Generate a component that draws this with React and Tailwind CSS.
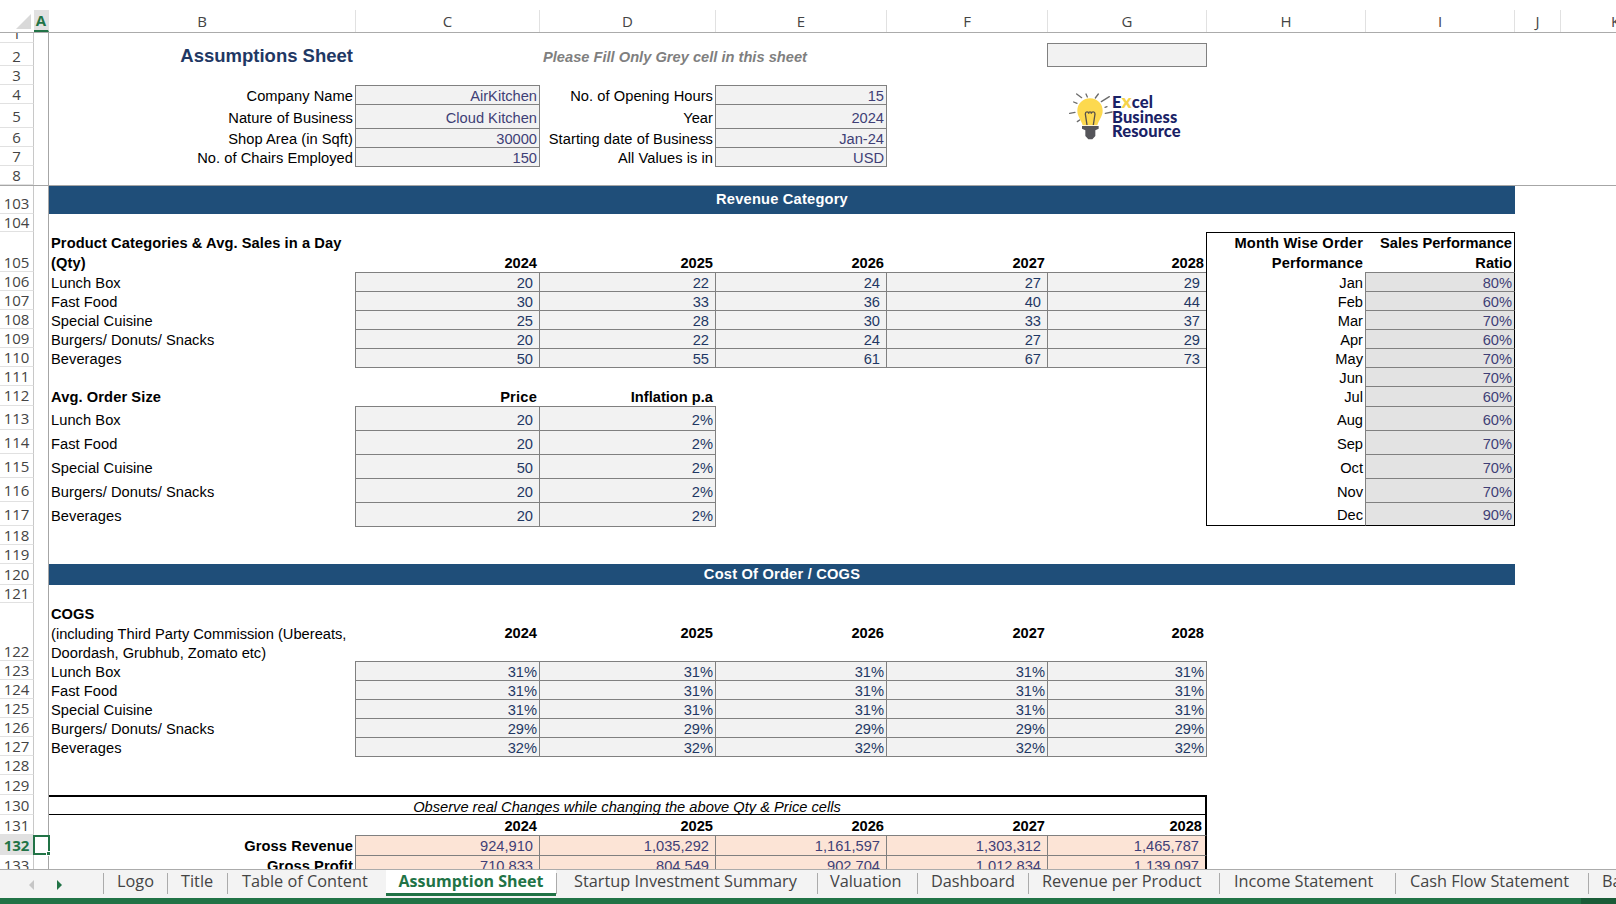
import React from "react";

const years = ["2024", "2025", "2026", "2027", "2028"];

const qtyRows = [
  [106, "Lunch Box", [20, 22, 24, 27, 29], "Jan", "80%"],
  [107, "Fast Food", [30, 33, 36, 40, 44], "Feb", "60%"],
  [108, "Special Cuisine", [25, 28, 30, 33, 37], "Mar", "70%"],
  [109, "Burgers/ Donuts/ Snacks", [20, 22, 24, 27, 29], "Apr", "60%"],
  [110, "Beverages", [50, 55, 61, 67, 73], "May", "70%"],
];

const priceRows = [
  [113, "Lunch Box", 20, "Aug", "60%"],
  [114, "Fast Food", 20, "Sep", "70%"],
  [115, "Special Cuisine", 50, "Oct", "70%"],
  [116, "Burgers/ Donuts/ Snacks", 20, "Nov", "70%"],
  [117, "Beverages", 20, "Dec", "90%"],
];

const cogsRows = [
  [123, "Lunch Box", "31%"],
  [124, "Fast Food", "31%"],
  [125, "Special Cuisine", "31%"],
  [126, "Burgers/ Donuts/ Snacks", "29%"],
  [127, "Beverages", "32%"],
];

const columns = [
  ["A", "w-[15px] bg-[#e1e1e1] text-[#217346] font-bold border-b-2 border-b-[#217346] border-r-[#a6a6a6]"],
  ["B", "w-[307px]"],
  ["C", "w-[184px]"],
  ["D", "w-[176px]"],
  ["E", "w-[171px]"],
  ["F", "w-[161px]"],
  ["G", "w-[159px]"],
  ["H", "w-[159px]"],
  ["I", "w-[149px]"],
  ["J", "w-[46px]"],
  ["K", "w-[110px]"],
];

const tabs = [
  ["Logo", "w-[64px]", "pl-[13px]"],
  ["Title", "w-[60px]", "pl-[13px]"],
  ["Table of Content", "w-[159px]", "pl-[14px]"],
  ["Assumption Sheet", "w-[170px]", "", true],
  ["Startup Investment Summary", "w-[261px]", "pl-[17px]"],
  ["Valuation", "w-[100px]", "pl-[12px]"],
  ["Dashboard", "w-[111px]", "pl-[13px]"],
  ["Revenue per Product", "w-[191px]", "pl-[13px]"],
  ["Income Statement", "w-[176px]", "pl-[14px]"],
  ["Cash Flow Statement", "w-[193px]", "pl-[14px]"],
  ["Balance Sheet", "w-[120px]", "pl-[13px]"],
];

function Row({ n, h, lh = "leading-[18px]", active, children }) {
  return (
    <div className={`flex shrink-0 ${h}`}>
      <div
        className={`w-[34px] shrink-0 flex items-end justify-center overflow-hidden border-r border-b border-r-[#c8c8c8] border-b-[#e1e1e1] font-['Open_Sans',sans-serif] text-[15px] ${lh} ${
          active ? "bg-[#e1e1e1] text-[#217346] font-bold" : "text-[#444444]"
        }`}
      >
        {n}
      </div>
      <div className="w-[15px] shrink-0 relative border-r border-r-[#a6a6a6]">
        {active && (
          <div className="absolute left-[-1px] right-[-2px] top-0 bottom-0 border-2 border-[#217346] z-10">
            <div className="absolute right-[-3px] bottom-[-3px] w-[5px] h-[5px] bg-[#217346] border border-white" />
          </div>
        )}
      </div>
      <div className="grid grid-cols-[307px_184px_176px_171px_161px_159px_159px_149px] grid-rows-[100%] flex-1">
        {children}
      </div>
    </div>
  );
}

// plain text cell, excel style: sits on the bottom of the row
function Cell({ className = "", lh = "leading-[16px]", children }) {
  return <div className={`flex items-end whitespace-nowrap ${lh} ${className}`}>{children}</div>;
}

// grey input cell, grows 1px so neighbouring borders overlap
function Input({ className = "", fill = "bg-[#f2f2f2]", lh = "leading-[16px]", children }) {
  return (
    <div
      className={`flex items-end justify-end whitespace-nowrap -ml-px -mb-px border border-[#808080] ${fill} ${lh} ${className}`}
    >
      {children}
    </div>
  );
}

function Month({ month, pct, last, lh = "leading-[16px]" }) {
  return (
    <>
      <Cell
        lh={lh}
        className={`col-start-7 -ml-px justify-end pr-[3px] border-l border-l-black ${last ? "border-b border-b-black" : ""}`}
      >
        {month}
      </Cell>
      <div
        className={`col-start-8 -ml-px flex items-end justify-end pr-[2px] border border-[#808080] border-r-black bg-[#e3e3e3] text-[#3f3f76] ${lh} ${
          last ? "border-b-black" : "-mb-px"
        }`}
      >
        {pct}
      </div>
    </>
  );
}

function Banner({ children }) {
  return (
    <div className="col-span-8 flex items-center justify-center pb-[2px] bg-[#1f4e79] text-white font-bold tracking-[0.2px]">
      {children}
    </div>
  );
}

function Logo() {
  return (
    <div className="absolute left-[1040px] top-[70px] w-[180px] h-[90px] z-10">
      <svg width="180" height="90" viewBox="0 0 540 270" className="absolute inset-0">
        <g stroke="#6b6b6b" strokeWidth="4" strokeLinecap="round">
          <path d="M110 72 L125 83" />
          <path d="M138 72 L142 81" />
          <path d="M175 72 L166 84" />
          <path d="M208 80 L184 95" />
          <path d="M101 96 L111 100" />
          <path d="M89 130 L105 127" />
          <path d="M216 126 L196 130" />
          <path d="M112 155 L119 150" />
          <path d="M195 112 L201 110" />
        </g>
        <path
          d="M150 85 C172 85 188 102 188 122 C188 140 176 150 172 166 L128 166 C124 150 112 140 112 122 C112 102 128 85 150 85 Z"
          fill="#fdd94f"
        />
        <path
          d="M141 165 L136 132 C136 124 146 124 146 131 C146 124 154 124 154 131 C154 124 165 124 165 132 L160 165"
          fill="none"
          stroke="#55504a"
          strokeWidth="4"
        />
        <path
          d="M126 168 L176 168 L176 176 L166 181 L166 198 L157 208 L145 208 L136 198 L136 181 L126 176 Z"
          fill="#55555a"
        />
      </svg>
      <div className="absolute left-[72px] top-[25px] font-['Lato',sans-serif] font-black text-[16.5px] leading-[14.5px] text-[#1a2266] tracking-[0.1px]">
        <div className="h-[14.5px]">
          E<span className="text-[19px] leading-[0] text-[#f5d34a]">x</span>cel
        </div>
        <div>Business</div>
        <div>Resource</div>
      </div>
    </div>
  );
}

export default function App() {
  const peach = "bg-[#fce4d6]";
  return (
    <div className="relative w-[1616px] h-[904px] overflow-hidden bg-white flex flex-col font-['Liberation_Sans',Arial,sans-serif] text-[14.67px] text-black">
      {/* column letters */}
      <div className="flex shrink-0 h-[33px] pt-[10px] overflow-hidden border-b border-b-[#ababab] font-['Open_Sans',sans-serif] text-[15px] text-[#444444]">
        <div className="w-[34px] shrink-0 flex items-end justify-end pr-[3px] pb-[3px]">
          <div className="w-0 h-0 border-l-[15px] border-l-transparent border-b-[15px] border-b-[#d9d9d9]" />
        </div>
        {columns.map(([c, cls]) => (
          <div key={c} className={`shrink-0 flex items-center justify-center border-r border-r-[#e1e1e1] ${cls}`}>
            {c}
          </div>
        ))}
      </div>

      <div className="flex-1 min-h-0 overflow-hidden flex flex-col">
        {/* frozen rows */}
        <Row n={1} h="h-[10px]" />
        <Row n={2} h="h-[23px]">
          <Cell lh="leading-[22px]" className="col-start-1 justify-end pr-[3px] -mb-px text-[18.5px] font-bold text-[#1f3864]">
            Assumptions Sheet
          </Cell>
          <Cell lh="leading-[18px]" className="col-start-3 pl-[3px] font-bold italic text-[#7f7f7f]">
            Please Fill Only Grey cell in this sheet
          </Cell>
          <Input className="col-start-6" />
        </Row>
        <Row n={3} h="h-[19px]" />
        <Row n={4} h="h-[19px]">
          <Cell className="col-start-1 justify-end pr-[3px] tracking-[0.05px]">Company Name</Cell>
          <Input className="col-start-2 pr-[2px] text-[#3f3f76]">AirKitchen</Input>
          <Cell className="col-start-3 justify-end pr-[3px] tracking-[0.05px]">No. of Opening Hours</Cell>
          <Input className="col-start-4 pr-[2px] text-[#3f3f76]">15</Input>
        </Row>
        <Row n={5} h="h-[24px]" lh="leading-[22px]">
          <Cell lh="leading-[20px]" className="col-start-1 justify-end pr-[3px] tracking-[0.05px]">Nature of Business</Cell>
          <Input lh="leading-[20px]" className="col-start-2 pr-[2px] text-[#3f3f76]">Cloud Kitchen</Input>
          <Cell lh="leading-[20px]" className="col-start-3 justify-end pr-[3px] tracking-[0.05px]">Year</Cell>
          <Input lh="leading-[20px]" className="col-start-4 pr-[2px] text-[#3f3f76]">2024</Input>
        </Row>
        <Row n={6} h="h-[19px]">
          <Cell className="col-start-1 justify-end pr-[3px] tracking-[0.05px]">Shop Area (in Sqft)</Cell>
          <Input className="col-start-2 pr-[2px] text-[#3f3f76]">30000</Input>
          <Cell className="col-start-3 justify-end pr-[3px] tracking-[0.05px]">Starting date of Business</Cell>
          <Input className="col-start-4 pr-[2px] text-[#3f3f76]">Jan-24</Input>
        </Row>
        <Row n={7} h="h-[19px]">
          <Cell className="col-start-1 justify-end pr-[3px] tracking-[0.05px]">No. of Chairs Employed</Cell>
          <Input className="col-start-2 pr-[2px] text-[#3f3f76]">150</Input>
          <Cell className="col-start-3 justify-end pr-[3px] tracking-[0.05px]">All Values is in</Cell>
          <Input className="col-start-4 pr-[2px] text-[#3f3f76]">USD</Input>
        </Row>
        <Row n={8} h="h-[19px]" />
        <div className="h-px shrink-0 bg-[#a6a6a6]" />

        {/* revenue */}
        <Row n={103} h="h-[28px]" lh="leading-[20px]">
          <Banner>Revenue Category</Banner>
        </Row>
        <Row n={104} h="h-[18px]" />
        <Row n={105} h="h-[40px]">
          <Cell lh="leading-[20px]" className="col-start-1 pl-[2px] font-bold tracking-[0.08px]">
            <div className="-mb-px">
              Product Categories &amp; Avg. Sales in a Day
              <br />
              (Qty)
            </div>
          </Cell>
          {years.map((y) => (
            <Cell key={y} lh="leading-[18px]" className="justify-end pr-[3px] font-bold">
              {y}
            </Cell>
          ))}
          <div className="-ml-px flex items-end justify-end pr-[3px] text-right font-bold tracking-[0.15px] leading-[20px] border-t border-l border-t-black border-l-black">
            <div className="-mb-px">
              Month Wise Order
              <br />
              Performance
            </div>
          </div>
          <div className="flex items-end justify-end pr-[2px] text-right font-bold leading-[20px] border-t border-r border-t-black border-r-black">
            <div className="-mb-px">
              Sales Performance
              <br />
              Ratio
            </div>
          </div>
        </Row>
        {qtyRows.map(([n, label, vals, month, pct]) => (
          <Row key={n} n={n} h="h-[19px]">
            <Cell className="pl-[2px] tracking-[0.05px]">{label}</Cell>
            {vals.map((v, i) => (
              <Input key={i} className="pr-[6px] text-[#1f3864]">
                {v}
              </Input>
            ))}
            <Month month={month} pct={pct} />
          </Row>
        ))}
        <Row n={111} h="h-[19px]">
          <Month month="Jun" pct="70%" />
        </Row>
        <Row n={112} h="h-[20px]" lh="leading-[20px]">
          <Cell lh="leading-[18px]" className="pl-[2px] font-bold tracking-[0.1px]">Avg. Order Size</Cell>
          <Cell lh="leading-[18px]" className="justify-end pr-[3px] font-bold tracking-[0.2px]">Price</Cell>
          <Cell lh="leading-[18px]" className="justify-end pr-[3px] font-bold">Inflation p.a</Cell>
          <Month lh="leading-[18px]" month="Jul" pct="60%" />
        </Row>
        {priceRows.map(([n, label, price, month, pct], i) => (
          <Row key={n} n={n} h="h-[24px]" lh="leading-[22px]">
            <Cell lh="leading-[20px]" className="pl-[2px] tracking-[0.05px]">{label}</Cell>
            <Input lh="leading-[20px]" className="pr-[6px] text-[#1f3864]">{price}</Input>
            <Input lh="leading-[20px]" className="pr-[2px] text-[#1f3864]">2%</Input>
            <Month lh="leading-[20px]" month={month} pct={pct} last={i === priceRows.length - 1} />
          </Row>
        ))}
        <Row n={118} h="h-[19px]" />
        <Row n={119} h="h-[19px]" />

        {/* cogs */}
        <Row n={120} h="h-[21px]" lh="leading-[20px]">
          <Banner>Cost Of Order / COGS</Banner>
        </Row>
        <Row n={121} h="h-[18px]" />
        <Row n={122} h="h-[58px]">
          <Cell lh="leading-[19px]" className="pl-[2px]">
            <div className="-mb-[2px]">
              <div className="font-bold leading-[21px]">COGS</div>
              <div>(including Third Party Commission (Ubereats,</div>
              <div>Doordash, Grubhub, Zomato etc)</div>
            </div>
          </Cell>
          {years.map((y) => (
            <div key={y} className="flex items-center justify-end pr-[3px] pt-[2px] font-bold">
              {y}
            </div>
          ))}
        </Row>
        {cogsRows.map(([n, label, pct]) => (
          <Row key={n} n={n} h="h-[19px]">
            <Cell className="pl-[2px] tracking-[0.05px]">{label}</Cell>
            {years.map((y) => (
              <Input key={y} className="pr-[2px] text-[#1f3864]">
                {pct}
              </Input>
            ))}
          </Row>
        ))}
        <Row n={128} h="h-[19px]" />
        <Row n={129} h="h-[20px]" />

        {/* result box */}
        <Row n={130} h="h-[20px]">
          <Cell lh="leading-[13px]" className="col-span-6 -ml-px justify-center italic border-t-2 border-b border-l border-r-2 border-black">
            Observe real Changes while changing the above Qty &amp; Price cells
          </Cell>
        </Row>
        <Row n={131} h="h-[20px]">
          <div className="-ml-px border-l border-black" />
          {years.map((y, i) => (
            <Cell key={y} lh="leading-[18px]" className={`justify-end pr-[3px] font-bold ${i === 4 ? "border-r-2 border-black" : ""}`}>
              {y}
            </Cell>
          ))}
        </Row>
        <Row n={132} h="h-[20px]" active>
          <Cell lh="leading-[18px]" className="-ml-px justify-end pr-[3px] font-bold tracking-[0.1px] border-l border-black">Gross Revenue</Cell>
          <Input lh="leading-[18px]" fill={peach} className="pr-[6px] text-[#3f3f76]">924,910</Input>
          <Input lh="leading-[18px]" fill={peach} className="pr-[6px] text-[#3f3f76]">1,035,292</Input>
          <Input lh="leading-[18px]" fill={peach} className="pr-[6px] text-[#3f3f76]">1,161,597</Input>
          <Input lh="leading-[18px]" fill={peach} className="pr-[6px] text-[#3f3f76]">1,303,312</Input>
          <Input lh="leading-[18px]" fill={peach} className="pr-[6px] text-[#3f3f76] border-r-2 border-r-black">1,465,787</Input>
        </Row>
        <Row n={133} h="h-[20px]">
          <Cell lh="leading-[18px]" className="-ml-px justify-end pr-[3px] font-bold tracking-[0.1px] border-l border-black">Gross Profit</Cell>
          <Input lh="leading-[18px]" fill={peach} className="pr-[6px] text-[#3f3f76]">710,833</Input>
          <Input lh="leading-[18px]" fill={peach} className="pr-[6px] text-[#3f3f76]">804,549</Input>
          <Input lh="leading-[18px]" fill={peach} className="pr-[6px] text-[#3f3f76]">902,704</Input>
          <Input lh="leading-[18px]" fill={peach} className="pr-[6px] text-[#3f3f76]">1,012,834</Input>
          <Input lh="leading-[18px]" fill={peach} className="pr-[6px] text-[#3f3f76] border-r-2 border-r-black">1,139,097</Input>
        </Row>
      </div>

      {/* sheet tabs */}
      <div className="flex shrink-0 h-[29px] overflow-hidden bg-[#f3f3f3] border-t border-t-[#ababab] font-['Open_Sans',sans-serif] text-[16.3px] text-[#444444]">
        <div className="w-[103px] shrink-0 flex items-center pl-[29px] gap-[23px] pt-[2px]">
          <div className="w-0 h-0 border-y-[5px] border-y-transparent border-r-[5px] border-r-[#c6c6c6]" />
          <div className="w-0 h-0 border-y-[5px] border-y-transparent border-l-[5px] border-l-[#217346]" />
        </div>
        {tabs.map(([name, cls, pad, active]) =>
          active ? (
            <div
              key={name}
              className={`shrink-0 h-[26px] flex items-center justify-center pb-[2px] bg-white border-b-[3px] border-b-[#217346] font-bold text-[16px] text-[#217346] ${cls}`}
            >
              {name}
            </div>
          ) : (
            <div key={name} className={`shrink-0 h-[24px] flex items-center whitespace-nowrap ${cls}`}>
              <div className="h-[21px] mt-[2px] border-l border-l-[#ababab] w-0" />
              <span className={`-mt-[2px] ${pad}`}>{name}</span>
            </div>
          )
        )}
      </div>

      {/* status bar */}
      <div className="h-[6px] shrink-0 flex bg-[#217346]">
        <div className="flex-1" />
        <div className="w-[35px] bg-[#1a5c38]" />
      </div>

      <Logo />
    </div>
  );
}
